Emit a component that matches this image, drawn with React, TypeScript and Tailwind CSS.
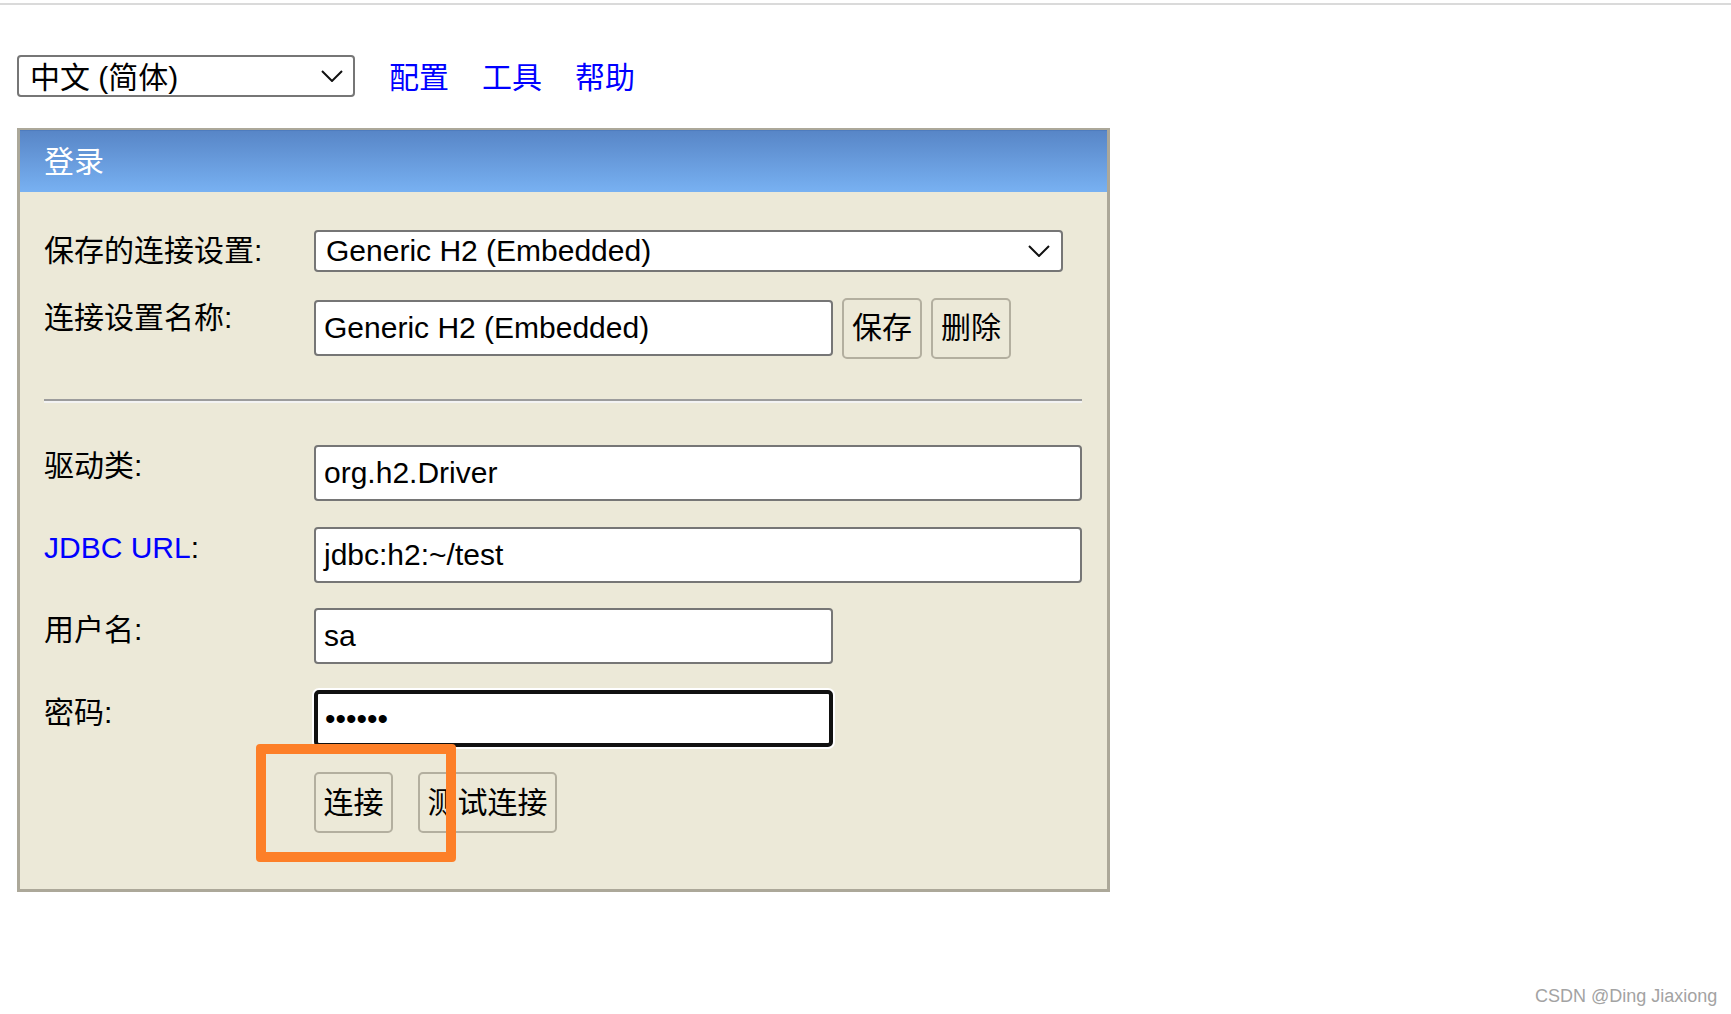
import type { ReactNode } from 'react'

function Chevron({ className }: { className?: string }) {
  return (
    <svg width="22" height="12" viewBox="0 0 22 12" className={className}>
      <polyline points="1,1 11,11 21,1" fill="none" stroke="#111" strokeWidth="2" />
    </svg>
  )
}

function Label({ children, pad = 'pt-[3px]' }: { children: ReactNode; pad?: string }) {
  return <div className={`w-[270px] shrink-0 ${pad} text-[30px] leading-[36px]`}>{children}</div>
}

function Field({ value, width }: { value: string; width: string }) {
  return (
    <div
      className={`${width} h-[56px] flex items-center pl-[8px] bg-white border-2 border-[#767676] rounded-[4px] text-[30px] leading-[36px]`}
    >
      {value}
    </div>
  )
}

function Btn({ label, width }: { label: string; width: string }) {
  return (
    <button
      className={`${width} h-[61px] flex items-center justify-center border-2 border-[#b3af9f] rounded-[5px] bg-[#ece9d8] text-[30px] leading-[36px]`}
    >
      {label}
    </button>
  )
}

export default function App() {
  return (
    <div className="relative min-h-[1014px] bg-white text-black font-['Liberation_Sans','Noto_Sans_CJK_SC',sans-serif]">
      <div className="h-[2px] mt-[3px] bg-[#dadada]" />

      <div className="flex items-center pl-[17px] mt-[50px]">
        <div className="w-[338px] h-[42px] flex items-center justify-between pl-[11px] pr-[10px] bg-white border-2 border-[#767676] rounded-[4px] text-[30px] leading-[36px]">
          <span className="pt-[3px]">中文 (简体)</span>
          <Chevron />
        </div>
        <div className="flex items-center gap-[33px] ml-[34px] pt-[3px] text-[30px] leading-[36px] text-[#0000ff]">
          <a href="#">配置</a>
          <a href="#">工具</a>
          <a href="#">帮助</a>
        </div>
      </div>

      <div className="ml-[17px] mt-[31px] w-[1093px] border-[3px] border-t-2 border-[#aca899] bg-[#ece9d8]">
        <div className="h-[62px] flex items-center pl-[24px] border-t border-[#4e7cbe] bg-linear-to-b from-[#5886c7] to-[#78b1f2] text-white text-[30px] leading-[36px]">
          登录
        </div>

        <div className="pl-[24px] pr-[25px] pt-[38px] pb-[56px]">
          <div className="flex items-center h-[42px]">
            <div className="w-[270px] shrink-0 text-[30px] leading-[36px]">保存的连接设置:</div>
            <div className="w-[749px] h-[42px] flex items-center justify-between pl-[10px] pr-[11px] bg-white border-2 border-[#767676] rounded-[4px] text-[30px] leading-[36px]">
              <span>Generic H2 (Embedded)</span>
              <Chevron />
            </div>
          </div>

          <div className="flex items-start mt-[25px]">
            <Label>连接设置名称:</Label>
            <div className="flex items-center h-[62px] gap-[9px]">
              <Field value="Generic H2 (Embedded)" width="w-[519px]" />
              <Btn label="保存" width="w-[80px]" />
              <Btn label="删除" width="w-[80px]" />
            </div>
          </div>

          <div className="mt-[40px] h-[4px] border-t-2 border-[#9c9c9c] bg-[#f3f3f3]" />

          <div className="flex items-start mt-[42px]">
            <Label>驱动类:</Label>
            <Field value="org.h2.Driver" width="w-[768px]" />
          </div>

          <div className="flex items-start mt-[26px]">
            <Label>
              <a href="#" className="text-[#0000ff]">JDBC URL</a>:
            </Label>
            <Field value="jdbc:h2:~/test" width="w-[768px]" />
          </div>

          <div className="flex items-start mt-[25px]">
            <Label pad="pt-[4px]">用户名:</Label>
            <Field value="sa" width="w-[519px]" />
          </div>

          <div className="flex items-start mt-[26px]">
            <Label pad="pt-[5px]">密码:</Label>
            <div className="w-[519px] h-[57px] flex items-center pl-[7px] bg-white border-[4px] border-[#111] rounded-[5px] shadow-[0_0_0_2px_#ffffff] text-[30px] leading-[36px]">
              ••••••
            </div>
          </div>

          <div className="flex items-start mt-[25px]">
            <div className="w-[270px] shrink-0" />
            <div className="flex gap-[25px]">
              <Btn label="连接" width="w-[79px]" />
              <Btn label="测试连接" width="w-[139px]" />
            </div>
          </div>
        </div>
      </div>

      <div className="absolute left-[256px] top-[741px] w-[200px] h-[118px] border-[10px] border-[#fd7f28] rounded-[4px]" />

      <div className="absolute left-[1535px] top-[981px] text-[18px] leading-[24px] text-[#a3a3a3] font-['Liberation_Sans',sans-serif]">
        CSDN @Ding Jiaxiong
      </div>
    </div>
  )
}
